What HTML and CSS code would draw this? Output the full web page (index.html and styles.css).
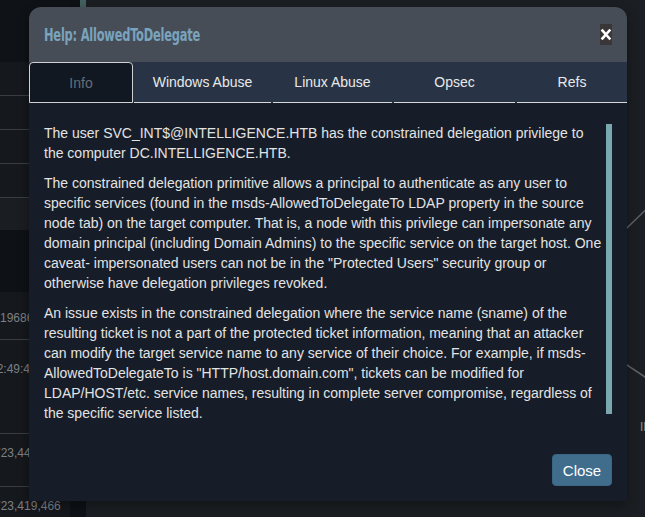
FILE: index.html
```html
<!DOCTYPE html>
<html>
<head>
<meta charset="utf-8">
<link rel="stylesheet" href="styles.css">
</head>
<body>
<div class="app">
  <aside class="side">
    <div class="side-top"></div>
    <div class="row r1"></div>
    <div class="row r1"></div>
    <div class="row r1"></div>
    <div class="row r1"></div>
    <div class="band-light"></div>
    <div class="band-dark"></div>
    <div class="row num r2"><span class="val v0">196866</span></div>
    <div class="row num r3"><span class="val v10">12:49:42</span></div>
    <div class="row num r4"><span class="val v6">723,448</span></div>
    <div class="row num r5 last"><span class="val v6">723,419,466</span></div>
  </aside>
  <div class="gutter"><span class="strip"></span></div>
  <main class="graph">
    <svg class="edges" width="559" height="517" viewBox="86 0 559 517">
      <line x1="600" y1="254" x2="660" y2="196" stroke="#5e6166" stroke-width="1.5"/>
      <line x1="600" y1="347" x2="660" y2="387" stroke="#5e6166" stroke-width="1.5"/>
    </svg>
    <span class="node-label">INTELLIGENCE.HTB</span>
  </main>
</div>

<div class="modal">
  <div class="modal-head">
    <h4 class="title">Help: AllowedToDelegate</h4>
    <button class="x" aria-label="close">
      <svg width="12" height="21" viewBox="0 0 12 21"><path d="M2.5 6.5 L9.5 14.5 M9.5 6.5 L2.5 14.5" stroke="#ffffff" stroke-width="2.6" stroke-linecap="square"/></svg>
    </button>
  </div>
  <ul class="tabs">
    <li class="tab active">Info</li>
    <li class="tab">Windows Abuse</li>
    <li class="tab">Linux Abuse</li>
    <li class="tab">Opsec</li>
    <li class="tab">Refs</li>
  </ul>
  <div class="modal-body">
    <div class="pane">
      <div class="text">
        <p>The user SVC_INT$@INTELLIGENCE.HTB has the constrained delegation privilege to the computer DC.INTELLIGENCE.HTB.</p>
        <p>The constrained delegation primitive allows a principal to authenticate as any user to specific services (found in the msds-AllowedToDelegateTo LDAP property in the source node tab) on the target computer. That is, a node with this privilege can impersonate any domain principal (including Domain Admins) to the specific service on the target host. One caveat- impersonated users can not be in the "Protected Users" security group or otherwise have delegation privileges revoked.</p>
        <p>An issue exists in the constrained delegation where the service name (sname) of the resulting ticket is not a part of the protected ticket information, meaning that an attacker can modify the target service name to any service of their choice. For example, if msds-AllowedToDelegateTo is "HTTP/host.domain.com", tickets can be modified for LDAP/HOST/etc. service names, resulting in complete server compromise, regardless of the specific service listed.</p>
      </div>
      <div class="thumb"></div>
    </div>
    <div class="footer">
      <button class="close">Close</button>
    </div>
  </div>
</div>
</body>
</html>
```

FILE: styles.css
```css
* { box-sizing: border-box; }

html, body {
  margin: 0;
  padding: 0;
  width: 645px;
  height: 517px;
  overflow: hidden;
  background: #1a1d21;
  font-family: "Liberation Sans", Arial, sans-serif;
}

.app {
  display: flex;
  height: 517px;
}

.side {
  width: 70px;
  flex: none;
  display: flex;
  flex-direction: column;
  background: #15181c;
  overflow: hidden;
}

.side-top {
  height: 62px;
  flex: none;
  background: #0f1216;
}

.row {
  height: 34px;
  border-bottom: 1px solid #393c40;
  flex: none;
}

.r1:first-of-type { height: 36px; }

.band-light {
  height: 32px;
  flex: none;
  background: #1a1d21;
}

.band-dark {
  height: 62px;
  flex: none;
  background: #0e1115;
}

.num {
  display: flex;
  align-items: flex-start;
  color: #7d8186;
  font-size: 12px;
  line-height: 14px;
  white-space: nowrap;
}

.v0 { margin-left: 0; }
.v6 { margin-left: -6px; }
.v10 { margin-left: -10px; }

.r2 { height: 48px; padding-top: 19px; }
.r3 { height: 94px; padding-top: 22px; }
.r4 { height: 53px; padding-top: 12px; }
.r5 { height: 27px; padding-top: 12px; border-bottom: none; }

.gutter {
  width: 16px;
  flex: none;
  background: #0e1115;
  display: flex;
  justify-content: flex-end;
  align-items: flex-start;
}

.strip {
  width: 6px;
  height: 7px;
  background: #41605f;
}

.graph {
  flex: 1;
  position: relative;
  background: #1b1e22;
  overflow: hidden;
}

.edges {
  position: absolute;
  left: 0;
  top: 0;
}

.node-label {
  position: absolute;
  left: 554px;
  top: 420px;
  color: #8c9095;
  font-size: 12px;
  white-space: nowrap;
}

/* modal */
.modal {
  position: absolute;
  left: 29px;
  top: 7px;
  width: 598px;
  height: 494px;
  display: flex;
  flex-direction: column;
  border-radius: 12px 12px 0 0;
  overflow: hidden;
  box-shadow: 0 4px 12px rgba(0, 0, 0, 0.35);
}

.modal-head {
  height: 55px;
  flex: none;
  background: #474d56;
  display: flex;
  align-items: center;
  justify-content: space-between;
  padding: 0 15px;
}

.title {
  margin: 0;
  font-family: "DejaVu Sans", "Liberation Sans", sans-serif;
  font-stretch: condensed;
  font-weight: bold;
  font-size: 18px;
  letter-spacing: -0.3px;
  color: #7aa3bd;
  line-height: 20px;
  padding-top: 1px;
  transform: scaleX(0.705);
  transform-origin: left center;
  white-space: nowrap;
}

.x {
  width: 12px;
  height: 21px;
  padding: 0;
  border: none;
  background: #3a3537;
  display: block;
  margin-top: -1px;
  flex: none;
}

.x svg { display: block; }

.tabs {
  list-style: none;
  margin: 0;
  padding: 0;
  height: 41px;
  flex: none;
  background: #283445;
  display: grid;
  grid-template-columns: 105px 139px 121px 123px 110px;
}

.tab {
  display: flex;
  align-items: center;
  justify-content: center;
  color: #e9e9e9;
  font-size: 14px;
  border-bottom: 1px solid #d6d8da;
  margin-right: 2px;
}

.tab:last-child { margin-right: 0; }

.tab.active {
  background: #111822;
  color: #666d76;
  border: 1px solid #cfd1d3;
  border-radius: 4px 4px 0 0;
  margin-right: 1px;
}

.modal-body {
  flex: 1;
  background: #161d29;
  padding: 20px 15px 15px 15px;
  display: flex;
  flex-direction: column;
}

.pane {
  display: flex;
  align-items: flex-start;
  gap: 2px;
  height: 290px;
}

.text {
  width: 560px;
  color: #e3e3e3;
  font-size: 14px;
  line-height: 20px;
}

.text p { margin: 0 0 10px 0; }

.thumb {
  width: 6px;
  height: 290px;
  margin-top: 1px;
  background: #79a9ae;
  flex: none;
}

.footer {
  margin-top: auto;
  display: flex;
  justify-content: flex-end;
}

.close {
  width: 60px;
  height: 32px;
  border: 1px solid #3a6585;
  border-radius: 4px;
  background: #416d8d;
  color: #ffffff;
  font-family: "Liberation Sans", Arial, sans-serif;
  font-size: 15px;
  padding: 0;
}
```
